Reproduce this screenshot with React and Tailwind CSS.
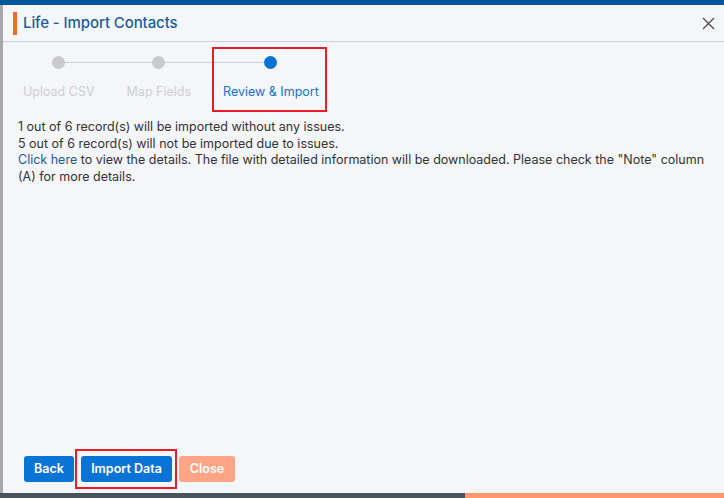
import React from "react";

export default function App() {
  return (
    <div className="w-[724px] h-[498px] overflow-hidden flex flex-col bg-[#f5f6fa] font-['Inter',_'Liberation_Sans',_sans-serif]">
      <div className="h-[5px] bg-[#00569b] shrink-0" />
      <div className="flex flex-1 min-h-0">
        <div className="w-[3px] bg-[#a8a8a8] shrink-0" />
        <div className="flex-1 flex flex-col bg-[#f5f6fa]">
          {/* Header */}
          <div className="h-[37px] shrink-0 border-b border-[#cdd0d4] flex items-center pl-[10px] pr-[8px] pt-[1px]">
            <div className="w-[4px] h-[23px] bg-[#f7692f]" />
            <div className="ml-[6px] text-[15px] font-medium text-[#1c5d9c] tracking-[-0.1px]">
              Life - Import Contacts
            </div>
            <div className="flex-1" />
            <svg width="13" height="13" viewBox="0 0 13 13" className="mr-[1px]">
              <path d="M1 1 L12 12 M12 1 L1 12" stroke="#4a4a4a" strokeWidth="1.2" />
            </svg>
          </div>

          {/* Stepper */}
          <div className="relative pl-[20px] pt-[14px] flex gap-[32px] text-[12.5px] leading-[16px]">
            <div className="absolute left-[56px] w-[212px] top-[20px] h-px bg-[#cccccc]" />
            <div className="relative flex flex-col items-center">
              <div className="w-[13px] h-[13px] rounded-full bg-[#cacaca]" />
              <div className="mt-[15px] text-[#cfcfcf]">Upload CSV</div>
            </div>
            <div className="relative flex flex-col items-center">
              <div className="w-[13px] h-[13px] rounded-full bg-[#cacaca]" />
              <div className="mt-[15px] text-[#cfcfcf]">Map Fields</div>
            </div>
            <div className="relative flex flex-col items-center">
              <div className="w-[13px] h-[13px] rounded-full bg-[#0a72d4]" />
              <div className="mt-[15px] text-[#1a73c9]">Review &amp; Import</div>
              <div className="absolute left-[-11px] right-[-8px] top-[-9px] bottom-[-12px] border-2 border-[#ec1c24]" />
            </div>
          </div>

          {/* Body text */}
          <div className="pl-[15px] pr-[8px] mt-[19px] text-[12.5px] leading-[16.5px] text-[#333333]">
            <div>1 out of 6 record(s) will be imported without any issues.</div>
            <div>5 out of 6 record(s) will not be imported due to issues.</div>
            <div>
              <span className="text-[#1e5a8c]">Click here</span> to view the details. The file with detailed information will be downloaded. Please check the "Note" column (A) for more details.
            </div>
          </div>

          <div className="flex-1" />

          {/* Buttons */}
          <div className="flex items-center pl-[21px] pb-[11px] gap-[7px] text-[12.5px] font-semibold text-white">
            <div className="w-[50px] h-[26px] rounded-[3px] bg-[#0a74d6] flex items-center justify-center">Back</div>
            <div className="relative">
              <div className="w-[91px] h-[26px] rounded-[3px] bg-[#0a74d6] flex items-center justify-center">Import Data</div>
              <div className="absolute left-[-6px] right-[-5px] top-[-7px] bottom-[-7px] border-2 border-[#ec1c24]" />
            </div>
            <div className="w-[56px] h-[26px] rounded-[3px] bg-[#ffa586] flex items-center justify-center">Close</div>
          </div>
        </div>
      </div>
      <div className="h-[5px] shrink-0 flex">
        <div className="w-[465px] bg-[#48535b]" />
        <div className="flex-1 bg-[#ff9672]" />
      </div>
    </div>
  );
}
